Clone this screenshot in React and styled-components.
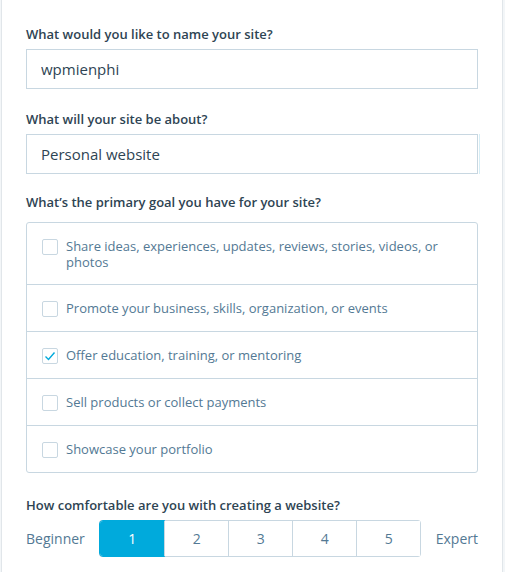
import React, { useState } from 'react';
import styled, { createGlobalStyle } from 'styled-components';

const GlobalStyle = createGlobalStyle`
  html, body {
    margin: 0;
    padding: 0;
    background: #f3f6f8;
  }
  body {
    font-family: "Open Sans", "Noto Sans", sans-serif;
  }
`;

const Card = styled.div`
  box-sizing: border-box;
  width: 502px;
  min-height: 572px;
  margin-left: 1px;
  background: #fff;
  border: 1px solid #e1e6ea;
  border-top: none;
  border-bottom: none;
  padding: 24px 24px 0 24px;
`;

const Field = styled.div`
  margin-bottom: ${(p) => p.gap || 20}px;
`;

const Label = styled.div`
  font-size: 13px;
  font-weight: 600;
  line-height: 20px;
  color: #2e4453;
  margin-bottom: ${(p) => p.space || 5}px;
`;

const TextInput = styled.input`
  box-sizing: border-box;
  display: block;
  width: 452px;
  height: 40px;
  padding: 0 14px;
  border: 1px solid #c8d7e1;
  border-radius: 0;
  font-family: inherit;
  font-size: 15px;
  color: #2e4453;
  background: #fff;
  outline: none;
  box-shadow: ${(p) => (p.hint ? '1px 0 0 #fff, 2px 0 0 #d6eef6' : 'none')};
`;

const Options = styled.div`
  width: 452px;
  box-sizing: border-box;
  border: 1px solid #c8d7e1;
  border-radius: 3px;
`;

const Option = styled.label`
  display: flex;
  align-items: flex-start;
  gap: 8px;
  padding: 15px 16px 14px 15px;
  font-size: 13px;
  line-height: 16px;
  color: #537994;
  cursor: pointer;
  & + & {
    border-top: 1px solid #c8d7e1;
  }
`;

const Box = styled.span`
  flex: none;
  box-sizing: border-box;
  width: 16px;
  height: 16px;
  margin-top: 1px;
  border: 1px solid #c8d7e1;
  border-radius: 2px;
  display: flex;
  align-items: center;
  justify-content: center;
`;

const Scale = styled.div`
  display: flex;
  align-items: center;
  justify-content: space-between;
`;

const ScaleLabel = styled.span`
  font-size: 14px;
  color: #537994;
`;

const Segments = styled.div`
  display: flex;
  border: 1px solid #c8d7e1;
  border-radius: 3px;
`;

const Segment = styled.button`
  width: 64px;
  height: 35px;
  margin: 0;
  padding: 0;
  border: none;
  border-left: ${(p) => (p.first ? 'none' : '1px solid #c8d7e1')};
  border-radius: ${(p) => (p.first ? '3px 0 0 3px' : '0')};
  background: ${(p) => (p.active ? '#00aadc' : '#fff')};
  color: ${(p) => (p.active ? '#fff' : '#537994')};
  font-family: inherit;
  font-size: 14px;
  cursor: pointer;
  outline: ${(p) => (p.active ? '1px solid #00aadc' : 'none')};
`;

const goals = [
  'Share ideas, experiences, updates, reviews, stories, videos, or photos',
  'Promote your business, skills, organization, or events',
  'Offer education, training, or mentoring',
  'Sell products or collect payments',
  'Showcase your portfolio',
];

const Check = () => (
  <svg width="12" height="12" viewBox="0 0 12 12">
    <path d="M1.5 6.5 L4.5 9.5 L10.5 2.5" fill="none" stroke="#00aadc" strokeWidth="1.4" />
  </svg>
);

export default function App() {
  const [picked, setPicked] = useState([2]);
  const [level, setLevel] = useState(1);

  const toggle = (i) =>
    setPicked((p) => (p.includes(i) ? p.filter((x) => x !== i) : [...p, i]));

  return (
    <Card>
      <GlobalStyle />
      <Field>
        <Label>What would you like to name your site?</Label>
        <TextInput defaultValue="wpmienphi" />
      </Field>
      <Field gap={18}>
        <Label>What will your site be about?</Label>
        <TextInput defaultValue="Personal website" hint />
      </Field>
      <Field gap={22}>
        <Label space={10}>What’s the primary goal you have for your site?</Label>
        <Options>
          {goals.map((g, i) => (
            <Option key={g} onClick={() => toggle(i)}>
              <Box>{picked.includes(i) && <Check />}</Box>
              <span>{g}</span>
            </Option>
          ))}
        </Options>
      </Field>
      <Field>
        <Label>How comfortable are you with creating a website?</Label>
        <Scale>
          <ScaleLabel>Beginner</ScaleLabel>
          <Segments>
            {[1, 2, 3, 4, 5].map((n) => (
              <Segment
                key={n}
                first={n === 1}
                active={level === n}
                onClick={() => setLevel(n)}
              >
                {n}
              </Segment>
            ))}
          </Segments>
          <ScaleLabel>Expert</ScaleLabel>
        </Scale>
      </Field>
    </Card>
  );
}
